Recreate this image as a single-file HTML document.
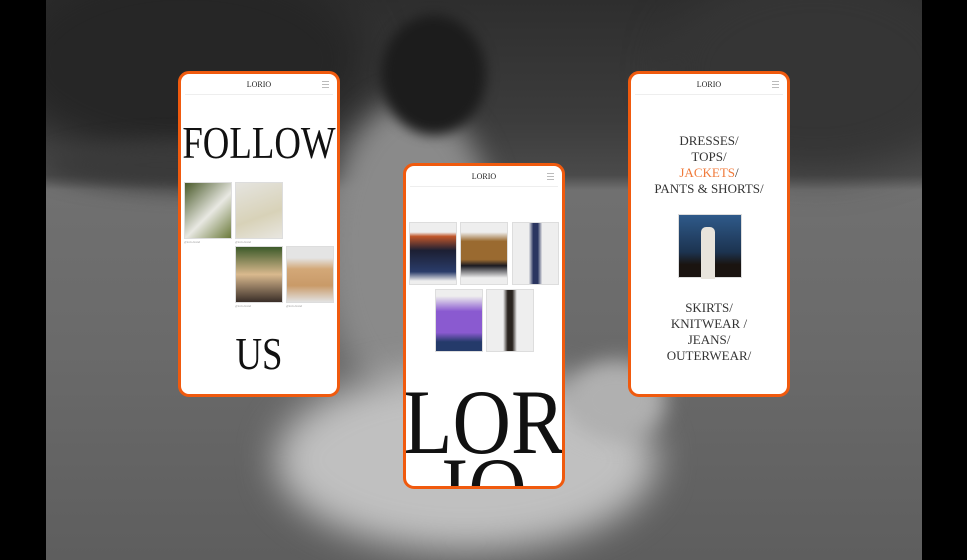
<!DOCTYPE html>
<html><head><meta charset="utf-8"><style>
*{margin:0;padding:0;box-sizing:border-box}
html,body{width:967px;height:560px;overflow:hidden}
body{background:#000;position:relative;font-family:"Liberation Serif",serif}
.bg{position:absolute;left:46px;top:0;width:876px;height:560px;overflow:hidden;
background:linear-gradient(180deg,#2e2e2e 0,#3c3c3c 120px,#4a4a4a 175px,#707070 190px,#6a6a6a 350px,#5e5e5e 560px)}
.blob{position:absolute;border-radius:50%}
.card{position:absolute;width:162px;height:326px;background:#fff;border:3px solid #f05a0e;border-radius:11px;overflow:hidden}
.hd{position:absolute;left:4px;right:4px;top:0;height:21px;border-bottom:1px solid #eee;text-align:center;font-size:8px;line-height:22px;color:#222}
.hb{position:absolute;right:4px;top:7px;width:7px;height:7px;border-top:1px solid #bbb;border-bottom:1px solid #bbb}
.hb:after{content:"";position:absolute;left:0;right:0;top:2px;border-top:1px solid #bbb}
.big{position:absolute;left:50%;color:#111;transform:translateX(-50%) scaleX(.8);white-space:nowrap}
.im{position:absolute;border:1px solid #ddd}
.cap{position:absolute;font-size:3px;color:#999}
.menu{position:absolute;left:0;right:0;text-align:center;font-size:13px;line-height:16px;color:#333}
</style></head><body>
<div class="bg">
<div class="blob" style="left:-40px;top:-40px;width:360px;height:200px;background:#262626;filter:blur(20px)"></div>
<div class="blob" style="left:620px;top:-30px;width:300px;height:200px;background:#353535;filter:blur(20px)"></div>
<div class="blob" style="left:0;top:140px;width:320px;height:50px;background:#3a3a3a;filter:blur(10px)"></div>
<div class="blob" style="left:280px;top:100px;width:170px;height:300px;background:#8a8a8a;filter:blur(14px)"></div>
<div class="blob" style="left:335px;top:15px;width:105px;height:120px;background:#1c1c1c;filter:blur(6px)"></div>
<div class="blob" style="left:230px;top:370px;width:380px;height:180px;background:#c0c0c0;filter:blur(18px)"></div>
<div class="blob" style="left:520px;top:360px;width:100px;height:80px;background:#b0b0b0;filter:blur(10px)"></div>
</div>

<div class="card" style="left:178px;top:71px">
<div class="hd">LORIO<div class="hb"></div></div>
<div class="big" style="top:44px;font-size:46px;line-height:50px">FOLLOW</div>
<div class="im" style="left:3px;top:108px;width:48px;height:57px;background:linear-gradient(135deg,#4a5a2a,#e8e8e2 55%,#6b7a3a)"></div>
<div class="im" style="left:54px;top:108px;width:48px;height:57px;background:linear-gradient(160deg,#e5e4df,#d8d2b8 60%,#e8e6e0)"></div>
<div class="im" style="left:54px;top:172px;width:48px;height:57px;background:linear-gradient(180deg,#3c5a2a,#d9b98e 50%,#3a2e28)"></div>
<div class="im" style="left:105px;top:172px;width:48px;height:57px;background:linear-gradient(180deg,#e4e4e4 20%,#d3a878 40%,#c99a68 70%,#e2e2e2)"></div>
<div class="cap" style="left:3px;top:166px">@lorio.brand</div>
<div class="cap" style="left:54px;top:166px">@lorio.brand</div>
<div class="cap" style="left:54px;top:230px">@lorio.brand</div>
<div class="cap" style="left:105px;top:230px">@lorio.brand</div>
<div class="big" style="top:255px;font-size:46px;line-height:50px">US</div>
</div>

<div class="card" style="left:403px;top:163px">
<div class="hd">LORIO<div class="hb"></div></div>
<div class="im" style="left:3px;top:56px;width:48px;height:63px;background:linear-gradient(180deg,#eee 15%,#c0562a 22%,#1c1f33 45%,#2a3c6a 80%,#eee 95%)"></div>
<div class="im" style="left:54px;top:56px;width:48px;height:63px;background:linear-gradient(180deg,#eee 15%,#9a6a30 30%,#9a6a30 60%,#1b1b22 70%,#eee 90%)"></div>
<div class="im" style="left:106px;top:56px;width:47px;height:63px;background:linear-gradient(90deg,#eee 35%,#2a3560 45%,#2a3560 55%,#eee 65%)"></div>
<div class="im" style="left:29px;top:123px;width:48px;height:63px;background:linear-gradient(180deg,#eee 10%,#8a5ad0 35%,#8a5ad0 70%,#243a6a 85%)"></div>
<div class="im" style="left:80px;top:123px;width:48px;height:63px;background:linear-gradient(90deg,#eee 35%,#2a2420 45%,#2a2420 55%,#eee 65%)"></div>
<div class="big" style="top:216px;font-size:92px;line-height:80px;transform:translateX(-50%) scaleX(.88)">LOR</div>
<div class="big" style="top:284px;font-size:92px;line-height:80px;transform:translateX(-50%) scaleX(.88)">IO</div>
</div>

<div class="card" style="left:628px;top:71px">
<div class="hd">LORIO<div class="hb"></div></div>
<div class="menu" style="top:59px">DRESSES/<br>TOPS/<br><span style="color:#f07a3a">JACKETS</span>/<br>PANTS &amp; SHORTS/</div>
<div class="im" style="left:47px;top:140px;width:64px;height:64px;background:linear-gradient(180deg,#2f5a8a,#1c3350 60%,#1a1410 80%);"><div style="position:absolute;left:22px;top:12px;width:14px;height:52px;background:#e8e4dc;border-radius:5px 5px 0 0"></div></div>
<div class="menu" style="top:226px">SKIRTS/<br>KNITWEAR /<br>JEANS/<br>OUTERWEAR/</div>
</div>
</body></html>
